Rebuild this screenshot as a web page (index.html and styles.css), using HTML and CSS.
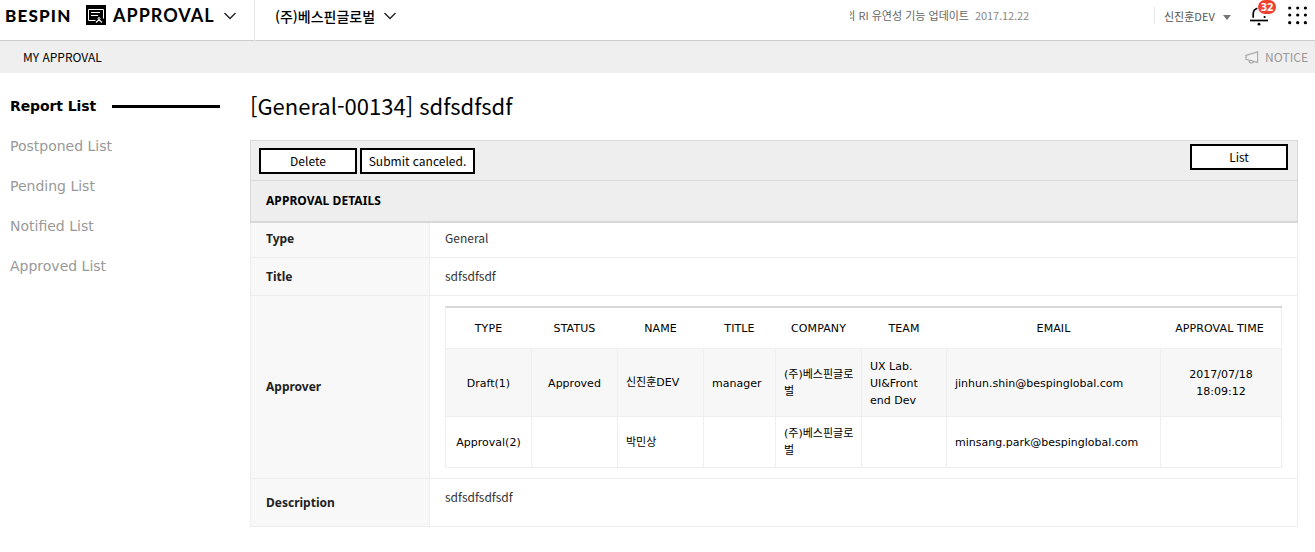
FILE: index.html
```
<!DOCTYPE html>
<html lang="ko">
<head>
<meta charset="utf-8">
<title>My Approval</title>
<link rel="stylesheet" href="styles.css">
</head>
<body>
<header class="topbar">
  <div class="brand">
    <span class="brand-name">BESPIN</span>
    <svg class="brand-icon" width="20" height="20" viewBox="0 0 20 20" fill="none" stroke="#fff"><rect width="20" height="20" fill="#000" stroke="none"/><path d="M9.5 15.5H2.5V4.5H17.5V13.5"/><path d="M5 7.5H14M5 10.5H12"/><circle cx="13" cy="13.5" r="1"/><path d="M10 17.5L13 14.8L16 17.5" stroke-width="1.3"/></svg>
    <span class="product">APPROVAL</span>
    <svg class="chevron" width="12" height="8" viewBox="0 0 12 8" fill="none" stroke="#222" stroke-width="1.4"><path d="M.5 1L6 6.5L11.5 1"/></svg>
  </div>
  <div class="company">
    <span class="company-name">(주)베스핀글로벌</span>
    <svg class="chevron" width="12" height="8" viewBox="0 0 12 8" fill="none" stroke="#222" stroke-width="1.4"><path d="M.5 1L6 6.5L11.5 1"/></svg>
  </div>
  <div class="ticker"><span class="ticker-text">의 RI 유연성 기능 업데이트</span><span class="ticker-date">2017.12.22</span></div>
  <div class="user"><span class="user-name">신진훈DEV</span><span class="caret"></span></div>
  <div class="bell">
    <svg width="18" height="21" viewBox="0 0 18 21" fill="none" stroke="#000"><path d="M3.2 12.8V9C3.2 6 4.6 4 7.4 3.2M14.6 11V13" stroke-width="1.7"/><path d="M0 15.5H18" stroke-width="1.7"/><circle cx="9" cy="19.2" r="1.4" fill="#000" stroke="none"/></svg>
    <span class="badge">32</span>
  </div>
  <svg class="apps" width="20" height="20" viewBox="0 0 20 20"><g fill="#000"><circle cx="2.7" cy="3" r="1.6"/><circle cx="10.7" cy="3" r="1.6"/><circle cx="18.4" cy="3" r="1.6"/><circle cx="2.7" cy="10" r="1.6"/><circle cx="10.7" cy="10" r="1.6"/><circle cx="18.4" cy="10" r="1.6"/><circle cx="2.7" cy="17.7" r="1.6"/><circle cx="10.7" cy="17.7" r="1.6"/><circle cx="18.4" cy="17.7" r="1.6"/></g></svg>
</header>
<nav class="subbar">
  <span class="subbar-title">MY APPROVAL</span>
  <span class="notice">
    <svg width="14" height="13" viewBox="0 0 14 13" fill="none" stroke="#aaa" stroke-width="1.2"><path d="M1 4.3L12.6.9V11.4L1 8.4ZM4 9.2C4 11.2 5 12 6.5 12C7.8 12 8.4 11.2 8.4 10.4"/></svg>
    <span class="notice-text">NOTICE</span>
  </span>
</nav>
<div class="layout">
  <aside class="side">
    <a class="side-item active"><span>Report List</span><i class="side-line"></i></a>
    <a class="side-item"><span>Postponed List</span></a>
    <a class="side-item"><span>Pending List</span></a>
    <a class="side-item"><span>Notified List</span></a>
    <a class="side-item"><span>Approved List</span></a>
  </aside>
  <main class="main">
    <h1 class="title"><span>[General-00134] sdfsdfsdf</span></h1>
    <div class="toolbar">
      <button class="btn">Delete</button>
      <button class="btn btn-wide">Submit canceled.</button>
      <button class="btn btn-list">List</button>
    </div>
    <h2 class="section"><span>APPROVAL DETAILS</span></h2>
    <div class="details">
      <div class="row row-type"><div class="label">Type</div><div class="value"><span>General</span></div></div>
      <div class="row row-title"><div class="label">Title</div><div class="value"><span>sdfsdfsdf</span></div></div>
      <div class="row row-approver">
        <div class="label">Approver</div>
        <div class="value">
          <table class="approvers">
            <colgroup><col class="c-type"><col class="c-mid"><col class="c-mid"><col class="c-title"><col class="c-mid"><col class="c-team"><col class="c-email"><col class="c-time"></colgroup>
            <thead><tr><th>TYPE</th><th>STATUS</th><th>NAME</th><th>TITLE</th><th>COMPANY</th><th>TEAM</th><th>EMAIL</th><th>APPROVAL TIME</th></tr></thead>
            <tbody>
              <tr class="draft"><td class="mid low">Draft(1)</td><td class="mid low">Approved</td><td>신진훈DEV</td><td class="low">manager</td><td>(주)베스핀글로<br>벌</td><td class="low">UX Lab.<br>UI&amp;Front<br>end Dev</td><td class="low">jinhun.shin@bespinglobal.com</td><td class="mid">2017/07/18<br>18:09:12</td></tr>
              <tr class="pending"><td class="mid">Approval(2)</td><td></td><td>박민상</td><td></td><td>(주)베스핀글로<br>벌</td><td></td><td>minsang.park@bespinglobal.com</td><td></td></tr>
            </tbody>
          </table>
        </div>
      </div>
      <div class="row row-desc"><div class="label">Description</div><div class="value"><span>sdfsdfsdfsdf</span></div></div>
    </div>
  </main>
</div>
</body>
</html>
```
FILE: styles.css
```
* { box-sizing: border-box; }
body { margin: 0; background: #fff; color: #000; font: 12px/17px "Noto Sans CJK KR", "Noto Sans", sans-serif; overflow: hidden; }
svg { display: block; flex: none; }
span { white-space: nowrap; }

.topbar { display: flex; height: 41px; border-bottom: 1px solid #ccc; }
.brand { display: flex; width: 255px; height: 41px; padding-left: 5px; border-right: 1px solid #e5e5e5; }
.brand-name { width: 81px; padding-top: 5px; font: 900 17px/22px Lato, sans-serif; letter-spacing: 1.2px; }
.brand-icon { margin-top: 5px; }
.product { width: 118px; padding: 4px 0 0 7px; font: 700 18px/22px Lato, sans-serif; letter-spacing: 1px; }
.chevron { margin-top: 12px; }
.company { display: flex; width: 595px; padding-left: 20px; }
.company-name { width: 109px; font-size: 14px; font-weight: 500; line-height: 33px; }
.ticker { display: flex; width: 304px; padding-top: 7px; font-size: 11px; color: #777; }
.ticker-text { display: flex; justify-content: flex-end; width: 119px; overflow: hidden; color: #666; }
.ticker-date { padding-left: 6px; color: #888; letter-spacing: -.1px; }
.user { display: flex; width: 96px; height: 17px; margin-top: 7px; padding-left: 9px; border-left: 1px solid #e5e5e5; font-size: 11px; color: #555; }
.user-name { width: 59px; line-height: 19px; }
.caret { width: 8px; height: 5px; margin-top: 8px; background: #777; clip-path: polygon(0 0, 100% 0, 50% 100%); }
.bell { position: relative; width: 37px; padding-top: 5px; }
.badge { position: absolute; left: 8px; top: 0; width: 18px; height: 14px; border-radius: 7px; background: #f04030; color: #fff; font: 700 11px/14px "Open Sans", sans-serif; text-align: center; }
.apps { margin-top: 5px; }

.subbar { display: flex; justify-content: space-between; height: 32px; padding: 0 7px 0 23px; background: #efefef; line-height: 31px; }
.notice { display: flex; width: 63px; color: #999; }
.notice svg { margin-top: 10px; }
.notice-text { padding-left: 6px; letter-spacing: .1px; }

.layout { display: flex; }
.side { width: 250px; padding: 13px 0 0 10px; font: 14px/40px "DejaVu Sans", sans-serif; color: #999; }
.side-item { display: flex; height: 40px; align-items: center; }
.side-item.active { font-weight: 700; color: #000; letter-spacing: -.1px; }
.side-item.active span { width: 102px; }
.side-line { width: 108px; height: 3px; background: #000; }

.main { width: 1048px; }
.title { height: 67px; margin: 0; font-size: 22px; font-weight: 400; line-height: 64px; }
.toolbar { display: flex; height: 41px; gap: 3px; padding: 7px 9px 0 8px; border: 1px solid #d8d8d8; background: #eee; }
.btn { width: 98px; height: 26px; padding: 0; border: 2px solid #000; background: #fff; color: #000; font: 12px/22px "Noto Sans CJK KR", sans-serif; white-space: nowrap; }
.btn-wide { width: 115px; }
.btn-list { margin: -4px 0 0 auto; }
.section { height: 42px; margin: 0; padding-left: 15px; border: solid #d8d8d8; border-width: 0 1px 2px; background: #eee; font: 700 12px/39px "Noto Sans", sans-serif; letter-spacing: .07px; }
.details { border: solid #eee; border-width: 0 1px; }
.row { display: flex; border-bottom: 1px solid #eee; }
.label { display: flex; align-items: center; width: 179px; padding-left: 15px; border-right: 1px solid #eee; background: #f8f8f8; color: #222; font: 700 12px/17px "Noto Sans", sans-serif; }
.value { flex: 1; padding: 9px 0 0 15px; color: #333; }
.row-type { height: 35px; }
.row-type .label { padding-bottom: 3px; }
.row-type .value { padding-top: 6px; }
.row-title { height: 38px; }
.row-approver { height: 183px; }
.row-approver .label { padding-bottom: 2px; }
.row-approver .value { padding-top: 10px; }
.row-desc { height: 48px; }

.approvers { width: 837px; table-layout: fixed; border-spacing: 0; border-top: 2px solid #d8d8d8; border-left: 1px solid #eee; color: #000; font: 11px/17px "DejaVu Sans", "Noto Sans CJK KR", sans-serif; }
.approvers th { height: 41px; padding: 0 1px 0 0; border-bottom: 1px solid #eee; font-weight: 400; letter-spacing: .1px; }
.approvers th:last-child { padding-right: 3px; border-right: 1px solid #eee; }
.approvers td { padding: 0 0 0 8px; border: solid #eee; border-width: 0 1px 1px 0; white-space: nowrap; }
.approvers .mid { padding: 0; text-align: center; }
.draft td { height: 68px; background: #f7f7f7; }
.approvers .low { padding-top: 2px; }
.pending td { height: 51px; }
.c-type, .c-mid { width: 86px; }
.c-title { width: 72px; }
.c-team { width: 85px; }
.c-email { width: 214px; }
.c-time { width: 121px; }
```
